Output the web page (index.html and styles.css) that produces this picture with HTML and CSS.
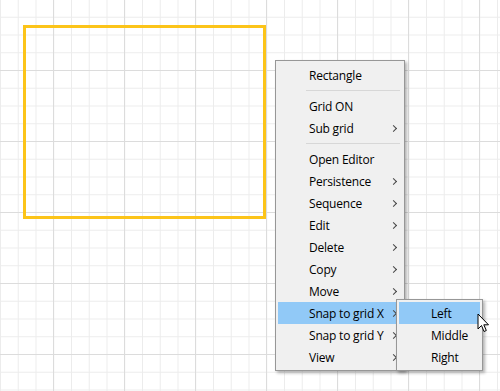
FILE: index.html
```html
<!DOCTYPE html>
<html lang="en">
<head>
<meta charset="UTF-8" />
<title>Diagram editor - context menu</title>
<link rel="stylesheet" href="styles.css">
</head>
<body>

<div class="canvas">
  <div class="shape-rect"></div>

  <!-- main context menu -->
  <ul class="menu main-menu">
    <li class="item">Rectangle</li>
    <li class="sep"></li>
    <li class="item">Grid ON</li>
    <li class="item sub">Sub grid</li>
    <li class="sep"></li>
    <li class="item">Open Editor</li>
    <li class="item sub">Persistence</li>
    <li class="item sub">Sequence</li>
    <li class="item sub">Edit</li>
    <li class="item sub">Delete</li>
    <li class="item sub">Copy</li>
    <li class="item sub">Move</li>
    <li class="item sub active">Snap to grid X</li>
    <li class="item sub">Snap to grid Y</li>
    <li class="item sub">View</li>
  </ul>

  <!-- submenu of Snap to grid X -->
  <ul class="menu snap-menu">
    <li class="item active">Left</li>
    <li class="item">Middle</li>
    <li class="item">Right</li>
  </ul>

  <svg class="cursor" width="13" height="20" viewBox="0 0 13 20">
    <path d="M1 1 L1 16 L4.5 12.5 L7 18.5 L9.3 17.5 L6.8 11.8 L11.5 11.8 Z" fill="#fff" stroke="#000" stroke-width="1" stroke-linejoin="round"/>
  </svg>
</div>

</body>
</html>
```

FILE: styles.css
```css
body {
  margin: 0;
  padding: 0;
  background: #fff;
  font-family: 'Segoe UI', 'Open Sans', 'Liberation Sans', sans-serif;
}
.canvas {
  position: relative;
  width: 500px;
  height: 391px;
  overflow: hidden;
  background-color: #fff;
  background-image:
    linear-gradient(to right, #dcdcdc 1px, transparent 1px),
    linear-gradient(to bottom, #dcdcdc 1px, transparent 1px),
    linear-gradient(to right, #ececec 1px, transparent 1px),
    linear-gradient(to bottom, #ececec 1px, transparent 1px);
  background-size: 71px 71px, 71px 71px, 17.75px 17.75px, 17.75px 17.75px;
  background-position: 53px 0, 0 -1px, 0 0, 0 -1px;
}
.shape-rect {
  position: absolute;
  left: 23px;
  top: 25px;
  width: 237px;
  height: 188px;
  border: 3px solid #fcc419;
}
/* Menus */
.menu {
  position: absolute;
  list-style: none;
  margin: 0;
  padding: 3px 2px 2px 2px;
  background: #f0f0f0;
  border: 1px solid #979797;
  box-shadow: 2px 2px 3px rgba(0,0,0,0.3);
  font-size: 12px;
  letter-spacing: -0.2px;
  color: #000;
}
.main-menu {
  left: 275px;
  top: 60px;
  width: 124px;
}
.snap-menu {
  left: 396px;
  top: 299px;
  width: 81px;
  padding-top: 2px;
}
.item {
  position: relative;
  height: 22px;
  line-height: 24px;
  padding-left: 31px;
  white-space: nowrap;
}
.snap-menu .item {
  padding-left: 32px;
}
.item.active {
  background: #91c9f7;
}
.item.sub::after {
  content: '';
  position: absolute;
  right: 6px;
  top: 9px;
  width: 4px;
  height: 4px;
  border-right: 1px solid #444;
  border-top: 1px solid #444;
  transform: rotate(45deg);
}
.sep {
  height: 9px;
  position: relative;
}
.sep::after {
  content: '';
  position: absolute;
  left: 28px;
  right: 2px;
  top: 4px;
  border-top: 1px solid #d7d7d7;
}
.cursor {
  position: absolute;
  left: 477px;
  top: 313px;
}
```
